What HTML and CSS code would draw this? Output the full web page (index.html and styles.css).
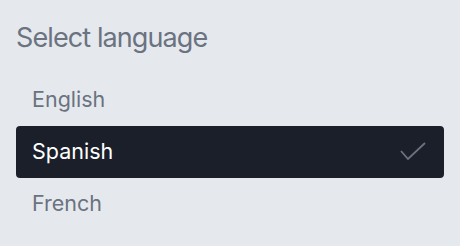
FILE: index.html
```html
<!DOCTYPE html>
<html lang="en">
<head>
    <meta charset="UTF-8">
    <title>Select language</title>
    <link rel="stylesheet" href="styles.css">
</head>
<body>

<div class="picker">
    <div class="picker-label">Select language</div>

    <ul class="options">
        <li class="option">English</li>
        <li class="option selected">
            <span>Spanish</span>
            <svg class="check" width="26" height="20" viewBox="0 0 26 20">
                <path d="M1 9 L8 17 L25 1" fill="none" stroke="currentColor" stroke-width="1.8"/>
            </svg>
        </li>
        <li class="option">French</li>
    </ul>
</div>

</body>
</html>
```
FILE: styles.css
```css
body {
    margin: 0;
    background: #e5e9ee;
    font-family: Inter, "Noto Sans", sans-serif;
}

.picker {
    padding: 20px 16px;
}

.picker-label {
    font-size: 27px;
    letter-spacing: -0.9px;
    color: #6b7280;
    line-height: 36px;
    margin-bottom: 18px;
}

.options {
    list-style: none;
    margin: 0;
    padding: 0;
}

.option {
    display: flex;
    justify-content: space-between;
    align-items: center;
    box-sizing: border-box;
    height: 52px;
    padding: 0 18px 2px 16px;
    font-size: 21.5px;
    color: #6b7280;
    border-radius: 4px;
}

.option.selected {
    background: #1b1f2a;
    color: #fff;
}

.check {
    color: #6b7280;
    margin-top: 2px;
}
```
